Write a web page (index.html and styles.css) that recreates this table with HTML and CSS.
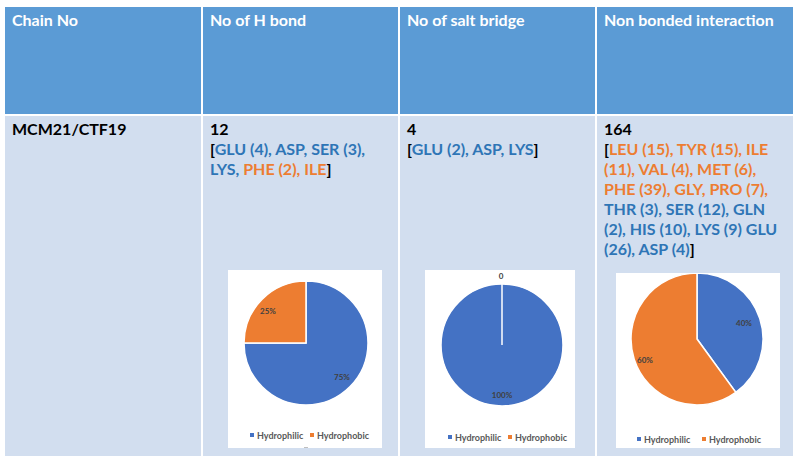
FILE: index.html
```html
<!DOCTYPE html>
<html>
<head>
<meta charset="utf-8">
<link rel="stylesheet" href="styles.css">
</head>
<body>
<div class="table">
  <div class="th">Chain No</div>
  <div class="th">No of H bond</div>
  <div class="th">No of salt bridge</div>
  <div class="th">Non bonded interaction</div>

  <div class="td">MCM21/CTF19</div>

  <div class="td">
    <div class="txt">12<br>[<span class="b">GLU (4), ASP, SER (3),</span><br><span class="b">LYS, </span><span class="o">PHE (2), ILE</span>]</div>
    <div class="chart c1">
      <svg width="154" height="178" viewBox="0 0 154 178">
        <path class="blue" d="M78 73 L78 11 A62 62 0 1 1 16 73 Z"/>
        <path class="orange" d="M78 73 L16 73 A62 62 0 0 1 78 11 Z"/>
        <text class="lbl" x="40" y="44" text-anchor="middle">25%</text>
        <text class="lbl" x="114" y="110" text-anchor="middle">75%</text>
        <rect class="sw-b" x="22" y="163" width="4" height="4"/>
        <text class="leg" x="29" y="169">Hydrophilic</text>
        <rect class="sw-o" x="82" y="163" width="4" height="4"/>
        <text class="leg" x="89" y="169">Hydrophobic</text>
        <rect class="tick" x="76" y="177" width="4" height="1"/>
      </svg>
    </div>
  </div>

  <div class="td">
    <div class="txt">4<br>[<span class="b">GLU (2), ASP, LYS</span>]</div>
    <div class="chart c2">
      <svg width="150" height="178" viewBox="0 0 150 178">
        <circle class="blue" cx="77" cy="75" r="61"/>
        <line x1="77" y1="75" x2="77" y2="14" stroke="#ffffff" stroke-width="1.5"/>
        <text class="lbl" x="76" y="9" text-anchor="middle">0</text>
        <text class="lbl" x="77" y="128" text-anchor="middle">100%</text>
        <rect class="sw-b" x="23" y="165" width="4" height="4"/>
        <text class="leg" x="30" y="171">Hydrophilic</text>
        <rect class="sw-o" x="83" y="165" width="4" height="4"/>
        <text class="leg" x="90" y="171">Hydrophobic</text>
      </svg>
    </div>
  </div>

  <div class="td">
    <div class="txt">164<br>[<span class="o">LEU (15), TYR (15), ILE</span><br><span class="o">(11), VAL (4), MET (6),</span><br><span class="o">PHE (39), GLY, PRO (7),</span><br><span class="b">THR (3), SER (12), GLN</span><br><span class="b">(2), HIS (10), LYS (9) GLU</span><br><span class="b">(26), ASP (4)</span>]</div>
    <div class="chart c3">
      <svg width="164" height="175" viewBox="0 0 164 175">
        <path class="blue" d="M81 66 L81 0 A66 66 0 0 1 119.8 119.4 Z"/>
        <path class="orange" d="M81 66 L119.8 119.4 A66 66 0 1 1 81 0 Z"/>
        <text class="lbl" x="128" y="53" text-anchor="middle">40%</text>
        <text class="lbl" x="29" y="90" text-anchor="middle">60%</text>
        <rect class="sw-b" x="21" y="164" width="4" height="4"/>
        <text class="leg" x="28" y="170">Hydrophilic</text>
        <rect class="sw-o" x="86" y="164" width="4" height="4"/>
        <text class="leg" x="93" y="170">Hydrophobic</text>
      </svg>
    </div>
  </div>
</div>
</body>
</html>
```

FILE: styles.css
```css
html, body {
  margin: 0;
  padding: 0;
  background: #ffffff;
}
body {
  padding: 7px 0 0 5px;
  font-family: "Lato", "Open Sans", sans-serif;
}
.table {
  display: grid;
  grid-template-columns: 196px 195px 195px 196px;
  grid-template-rows: 107px 340px;
  gap: 2px;
}
.th {
  background: #5b9bd5;
  color: #ffffff;
  font-weight: 700;
  font-size: 16px;
  line-height: 20px;
  padding: 3px 7px;
}
.td {
  background: #d2deef;
  color: #000000;
  font-weight: 700;
  font-size: 16px;
  line-height: 20px;
  padding: 3px 7px 0;
  display: flex;
  flex-direction: column;
  overflow: hidden;
}
.txt {
  white-space: nowrap;
}
.b { color: #2e75b6; }
.o { color: #ed7d31; }
.chart {
  margin-top: auto;
  margin-bottom: 8px;
  background: #ffffff;
  line-height: 0;
}
.c1 { width: 154px; height: 178px; margin-left: 18px; }
.c2 { width: 150px; height: 178px; margin-left: 18px; }
.c3 { width: 164px; height: 175px; margin-left: 12px; }
.blue { fill: #4472c4; stroke: #ffffff; stroke-width: 1.5; }
.orange { fill: #ed7d31; stroke: #ffffff; stroke-width: 1.5; }
.lbl {
  font-family: "Lato", sans-serif;
  font-size: 8px;
  fill: #404040;
}
.leg {
  font-family: "Lato", sans-serif;
  font-size: 9px;
  fill: #595959;
}
.sw-b { fill: #4472c4; }
.sw-o { fill: #ed7d31; }
.tick { fill: #bfbfbf; }
```
